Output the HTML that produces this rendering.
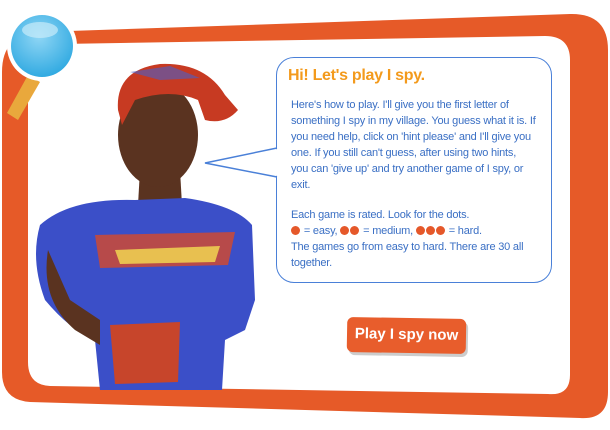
<!DOCTYPE html>
<html><head><meta charset="utf-8"><style>
html,body{margin:0;padding:0;background:#fff;width:610px;height:430px;overflow:hidden}
.wrap{position:relative;width:610px;height:430px}
svg{position:absolute;left:0;top:0}
.bubble{position:absolute;left:276px;top:57px;width:276px;height:226px;box-sizing:border-box;border:1.5px solid #4a80d8;border-radius:18px;background:#fff}
.title{position:absolute;left:288px;top:67px;font:bold 16px "Liberation Sans",sans-serif;color:#f39a1c;letter-spacing:-0.3px}
.txt{position:absolute;left:291px;top:97px;width:262px;font:11px/16.1px "Liberation Sans",sans-serif;color:#3a6fc4;letter-spacing:-0.2px;white-space:nowrap}
.gap{height:13px}
.dot{display:inline-block;width:9px;height:9px;border-radius:50%;background:#e5582a;vertical-align:-1px;margin-right:1px}
.btn{position:absolute;left:347px;top:318px;width:119px;height:35px;background:#e85d2c;border-radius:6px;box-shadow:2px 3px 0 #ccc;color:#fff;font:bold 15px "Liberation Sans",sans-serif;line-height:33px;text-align:center;transform:rotate(1deg)}
</style></head><body><div class="wrap">
<svg width="610" height="430" viewBox="0 0 610 430">
<defs>
<radialGradient id="lens" cx="45%" cy="35%" r="70%"><stop offset="0" stop-color="#8fd6f5"/><stop offset="1" stop-color="#2ba7e0"/></radialGradient>
</defs>
<path d="M40 32 L570 14 Q608 13 608 50 L608 392 Q608 420 580 418 L30 402 Q2 400 2 372 L2 72 Q2 34 40 32Z" fill="#e65a28"/>
<path d="M60 44 L545 36 Q570 36 570 60 L570 375 Q570 396 548 394 L50 386 Q28 385 28 362 L28 72 Q28 45 60 44Z" fill="#fff"/>
<!-- girl -->
<path d="M140 170 L180 170 L182 205 L138 205Z" fill="#5a3320"/>
<ellipse cx="158" cy="135" rx="40" ry="52" fill="#5a3320"/>
<path d="M118 110 Q115 70 160 64 Q205 62 225 95 L238 110 Q225 125 205 120 L198 100 Q170 88 135 100 L122 125Z" fill="#c73a22"/>
<path d="M130 72 L170 66 L200 78 L160 80Z" fill="#4a5fc8" opacity="0.6"/>
<path d="M40 225 Q70 198 135 200 L185 198 Q235 205 252 225 L255 300 L245 330 L225 340 L222 390 L100 390 L95 340 Q70 330 45 300 Q30 260 40 225Z" fill="#3b4fc8"/>
<path d="M95 235 L235 232 L228 265 L100 268Z" fill="#d7492a" opacity="0.8"/>
<path d="M110 325 L180 322 L178 382 L115 384Z" fill="#c7452b"/>
<path d="M115 250 L220 246 L215 262 L120 264Z" fill="#e8c050"/>
<path d="M48 250 Q40 300 75 330 L100 345 L100 320 L70 300Z" fill="#5a3320"/>
<!-- magnifier -->
<path d="M28 75 L40 82 L18 120 L7 113Z" fill="#e9a83c"/>
<circle cx="42" cy="46" r="35" fill="#fff"/>
<circle cx="42" cy="46" r="31" fill="url(#lens)"/>
<ellipse cx="40" cy="30" rx="18" ry="8" fill="#c8ebfa" opacity="0.7"/>
</svg>
<div class="bubble"></div>
<svg width="610" height="430" viewBox="0 0 610 430"><path d="M277.5 149 L206 163 L277.5 176Z" fill="#fff"/><path d="M277 148 L205 163 L277 177" fill="none" stroke="#4a80d8" stroke-width="1.5"/></svg>
<div class="title">Hi! Let's play I spy.</div>
<div class="txt">Here's how to play. I'll give you the first letter of<br>something I spy in my village. You guess what it is. If<br>you need help, click on 'hint please' and I'll give you<br>one. If you still can't guess, after using two hints,<br>you can 'give up' and try another game of I spy, or<br>exit.<div class="gap"></div>Each game is rated. Look for the dots.<br><span class="dot"></span> = easy, <span class="dot"></span><span class="dot"></span> = medium, <span class="dot"></span><span class="dot"></span><span class="dot"></span> = hard.<br>The games go from easy to hard. There are 30 all<br>together.</div>
<div class="btn">Play I spy now</div>
</div></body></html>
